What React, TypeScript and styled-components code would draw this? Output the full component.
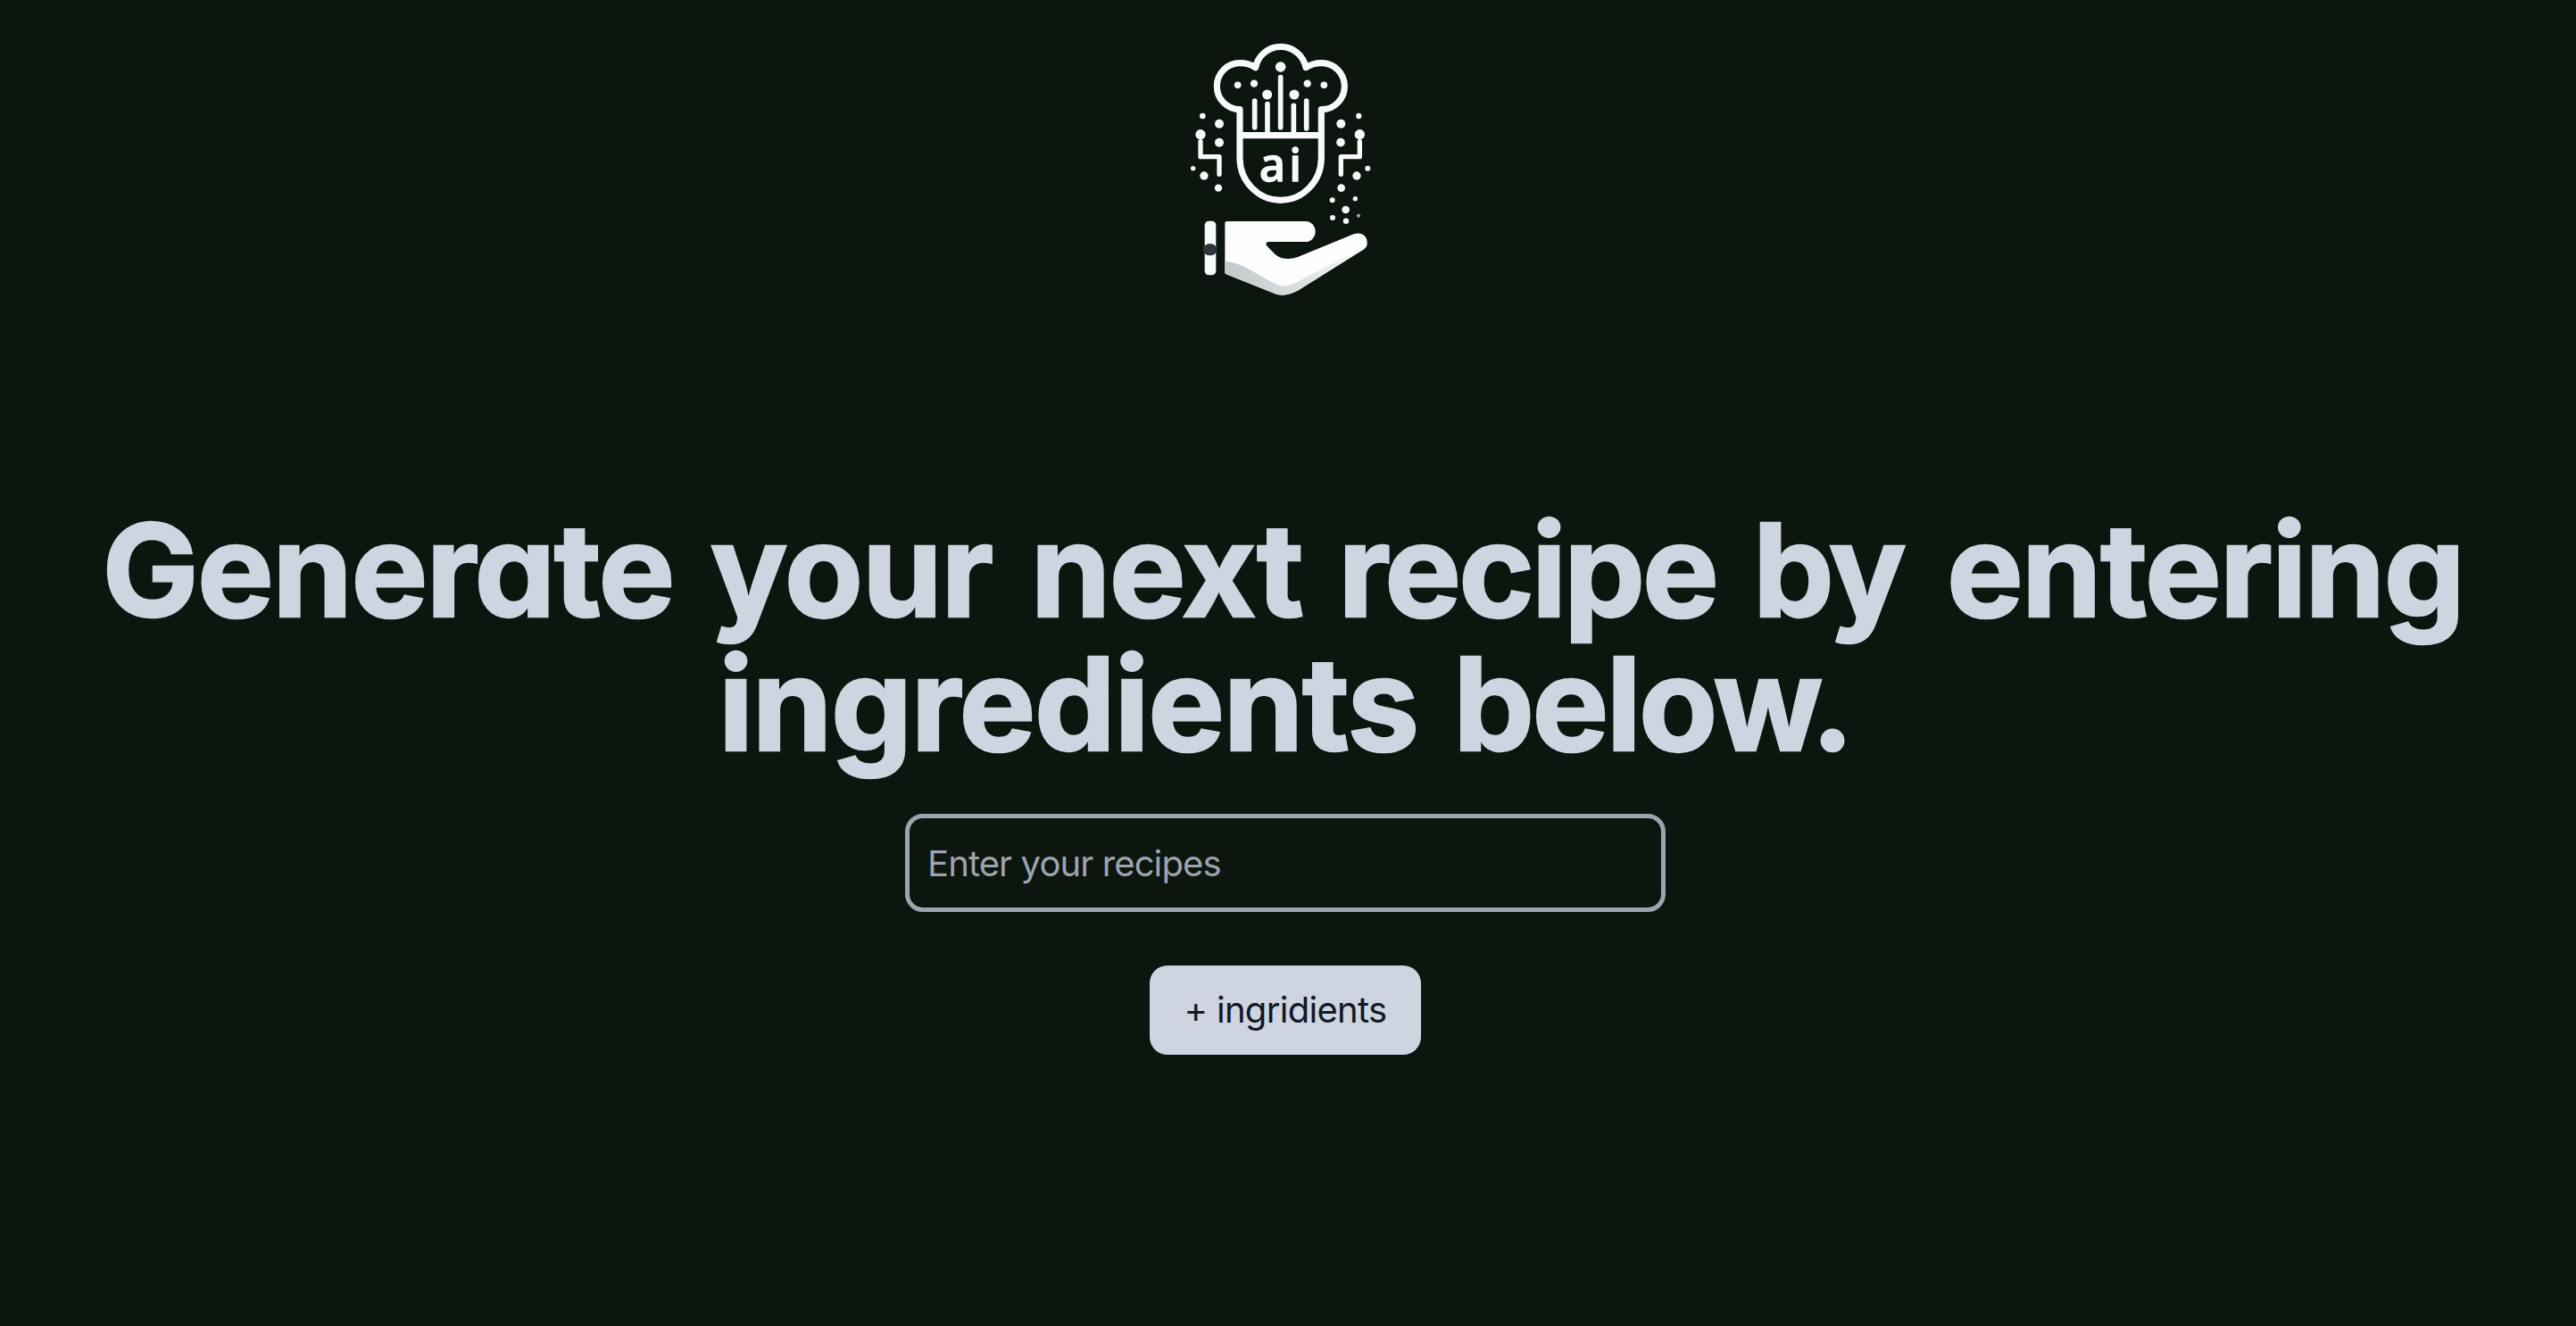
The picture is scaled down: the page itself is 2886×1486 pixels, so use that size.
import React from "react";
import styled, { createGlobalStyle } from "styled-components";

const GlobalStyle = createGlobalStyle`
  *, *::before, *::after { box-sizing: border-box; }
  body { margin: 0; background: #0c150e; }
`;

const Page = styled.main`
  display: flex;
  flex-direction: column;
  align-items: center;
  height: 1486px;
  overflow: hidden;
  background: #0c150e;
  font-family: Inter, "Liberation Sans", sans-serif;
`;

const Header = styled.header`
  width: 100%;
  height: 564px;
  padding: 30px 0 0 1320px;
`;

const Logo = styled.svg`
  display: block;
  width: 230px;
  height: 320px;
`;

const LogoText = styled.text`
  font-family: "Noto Sans", sans-serif;
  font-size: 154px;
  font-weight: 500;
  fill: #f8f9fb;
  stroke: #f8f9fb;
  stroke-width: 4px;
  stroke-linejoin: round;
`;

const Heading = styled.h1`
  width: 100%;
  margin: 0;
  color: #ced4e0;
  font-size: 144px;
  font-weight: 700;
  line-height: 150px;
  font-feature-settings: "cv11" 1;
  -webkit-text-stroke: 2.5px #ced4e0;
  paint-order: stroke fill;
`;

const Line = styled.span<{ $indent: number }>`
  display: flex;
  padding-left: ${(p) => p.$indent}px;
  white-space: pre;
`;

const Word = styled.span<{ $gap: number; $spacing: number }>`
  margin-left: ${(p) => p.$gap}px;
  letter-spacing: ${(p) => p.$spacing}px;
`;

const Form = styled.form`
  display: flex;
  flex-direction: column;
  align-items: center;
  gap: 60px;
  padding-top: 48px;
`;

const Field = styled.input`
  width: 852px;
  height: 110px;
  padding: 0 20px;
  border: 5px solid #9da3af;
  border-radius: 20px;
  outline: none;
  background: transparent;
  color: #ced4e0;
  font: 400 40px/60px Inter, "Liberation Sans", sans-serif;
  letter-spacing: -0.9px;
  margin-left: -6px;

  &::placeholder {
    color: #9da3af;
    opacity: 1;
  }
`;

const AddButton = styled.button`
  width: 304px;
  height: 100px;
  padding: 0 0 1px;
  border: 0;
  border-radius: 20px;
  background: #ced4e0;
  color: #111827;
  font: 400 40px/60px Inter, "Liberation Sans", sans-serif;
  letter-spacing: -0.7px;
  margin-left: -6px;
`;

type Item = { text: string; gap: number; spacing: number };

const lines: { indent: number; words: Item[] }[] = [
  {
    indent: 114.5,
    words: [
      { text: "Generate", gap: 0, spacing: -1.5 },
      { text: "your", gap: 41, spacing: -1.1 },
      { text: "next", gap: 42.6, spacing: -1.6 },
      { text: "recipe", gap: 40, spacing: -2.9 },
      { text: "by", gap: 41, spacing: -3.2 },
      { text: "entering", gap: 48.5, spacing: -1.6 },
    ],
  },
  {
    indent: 805,
    words: [
      { text: "ingredients", gap: 0, spacing: -1.3 },
      { text: "below.", gap: 39.5, spacing: -2.6 },
    ],
  },
];

const dots: [number, number, number][] = [
  [344, 135, 17.5], [200, 196, 11.5], [255, 191, 12.5], [299, 228, 16.5],
  [390, 228, 16.5], [434, 191, 12.5], [490, 196, 11.5],
  [82, 300, 10], [138, 326, 15], [75, 362, 17], [138, 389, 15],
  [50, 476, 8], [87, 501, 14], [135, 542, 12.5],
  [607, 300, 9.5], [547, 326, 15], [610, 362, 17], [546, 389, 14.5],
  [637, 476, 9], [600, 501, 14], [548, 542, 13],
  [518, 583, 9], [595, 578, 8], [563, 615, 13], [519, 642, 9], [564, 653, 9.5],
];

const bars: [number, number, number][] = [
  [257, 249, 338], [300, 260, 360], [344, 170, 338], [388, 265, 360], [431, 249, 342],
];

function ChefLogo() {
  return (
    <Logo viewBox="0 0 690 960" fill="none" role="img" aria-label="ai chef">
      <defs>
        <linearGradient id="shade" x1="158" y1="0" x2="635" y2="0" gradientUnits="userSpaceOnUse">
          <stop offset="0" stopColor="#c3c8cb" />
          <stop offset="0.45" stopColor="#d8dbdd" />
          <stop offset="1" stopColor="#fafafa" />
        </linearGradient>
      </defs>
      <g stroke="#f8f9fb" strokeLinejoin="round">
        <path
          strokeWidth="21.5"
          d="M207 278A77 78 0 0 1 130 200A77 78 0 0 1 207 122Q238 122 260 137A86 86 0 0 1 429 137Q452 122 482 122A77 78 0 0 1 559 200A77 78 0 0 1 481 278V440A137 143 0 0 1 207 440ZM207 365H481"
        />
        <g strokeWidth="17" strokeLinecap="round">
          {bars.map(([x, top, bottom]) => (
            <path key={x} d={`M${x} ${top}V${bottom}`} />
          ))}
        </g>
        <g strokeWidth="16" strokeLinecap="round">
          <path d="M75 386V437H138V496" />
          <path d="M610 386V437H547V496" />
        </g>
      </g>
      <g fill="#f8f9fb">
        {dots.map(([x, y, r]) => (
          <circle key={`${x}-${y}`} cx={x} cy={y} r={r} />
        ))}
      </g>
      <circle cx="606" cy="635" r="6" fill="#a9adab" />
      <LogoText x="272" y="519">
        a<tspan x="373">i</tspan>
      </LogoText>
      <rect x="89" y="653" width="38" height="182" rx="14" fill="#f8f9fb" />
      <ellipse cx="107" cy="749" rx="23.5" ry="20" fill="#32333c" />
      <path
        fill="#fdfdfd"
        d="M164 654H428A33 34.500 0 0 1 428 723H303C295 724 293 732 299 737C322 761 334 780 370 780Q386 780 402 774L590 697C617 688 637 704 635 730Q635 741 622 749L404 886Q352 914 315 893L161 832Q157 830 157 825V661Q157 654 164 654Z"
      />
      <path
        fill="url(#shade)"
        d="M157 788C210 793 250 822 300 850C335 872 352 879 395 861L540 785L630 741Q628 745 622 749L404 886Q352 914 315 893L161 832Q157 830 157 825Z"
      />
    </Logo>
  );
}

export default function App() {
  return (
    <>
      <GlobalStyle />
      <Page>
        <Header>
          <ChefLogo />
        </Header>
        <Heading>
          {lines.map((line) => (
            <Line key={line.indent} $indent={line.indent}>
              {line.words.map((word) => (
                <Word key={word.text} $gap={word.gap} $spacing={word.spacing}>
                  {word.text}
                </Word>
              ))}
            </Line>
          ))}
        </Heading>
        <Form onSubmit={(event) => event.preventDefault()}>
          <Field type="text" placeholder="Enter your recipes" />
          <AddButton type="submit">+ ingridients</AddButton>
        </Form>
      </Page>
    </>
  );
}
